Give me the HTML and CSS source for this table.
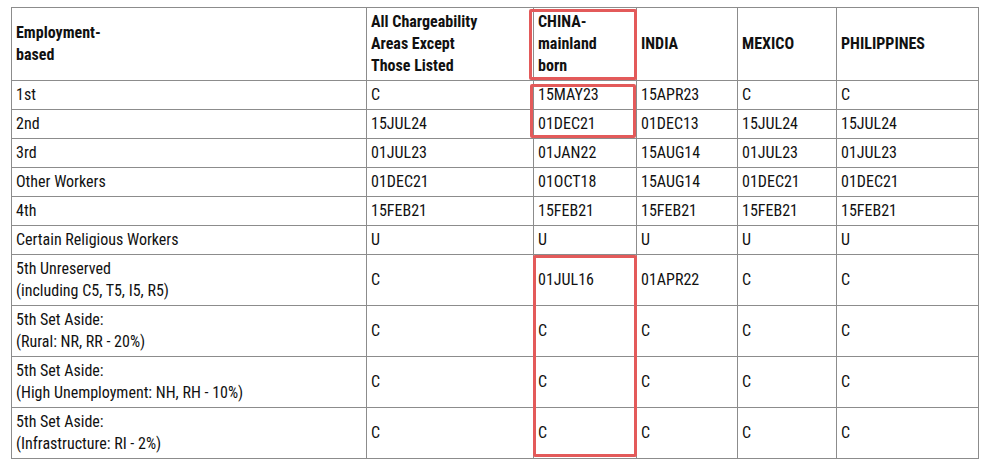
FILE: index.html
```html
<!DOCTYPE html>
<html>
<head>
<meta charset="utf-8">
<link rel="stylesheet" href="styles.css">
</head>
<body>
<div class="page">
<table class="bulletin">
  <colgroup>
    <col class="c1"><col class="c2"><col class="c3"><col class="c4"><col class="c5"><col class="c6">
  </colgroup>
  <thead>
    <tr>
      <th>Employment-<br>based</th>
      <th>All Chargeability<br>Areas Except<br>Those Listed</th>
      <th>CHINA-<br>mainland<br>born</th>
      <th>INDIA</th>
      <th>MEXICO</th>
      <th>PHILIPPINES</th>
    </tr>
  </thead>
  <tbody>
    <tr><td>1st</td><td>C</td><td>15MAY23</td><td>15APR23</td><td>C</td><td>C</td></tr>
    <tr><td>2nd</td><td>15JUL24</td><td>01DEC21</td><td>01DEC13</td><td>15JUL24</td><td>15JUL24</td></tr>
    <tr><td>3rd</td><td>01JUL23</td><td>01JAN22</td><td>15AUG14</td><td>01JUL23</td><td>01JUL23</td></tr>
    <tr><td>Other Workers</td><td>01DEC21</td><td>01OCT18</td><td>15AUG14</td><td>01DEC21</td><td>01DEC21</td></tr>
    <tr><td>4th</td><td>15FEB21</td><td>15FEB21</td><td>15FEB21</td><td>15FEB21</td><td>15FEB21</td></tr>
    <tr><td>Certain Religious Workers</td><td>U</td><td>U</td><td>U</td><td>U</td><td>U</td></tr>
    <tr><td>5th Unreserved<br>(including C5, T5, I5, R5)</td><td>C</td><td>01JUL16</td><td>01APR22</td><td>C</td><td>C</td></tr>
    <tr><td>5th Set Aside:<br>(Rural: NR, RR - 20%)</td><td>C</td><td>C</td><td>C</td><td>C</td><td>C</td></tr>
    <tr><td>5th Set Aside:<br>(High Unemployment: NH, RH - 10%)</td><td>C</td><td>C</td><td>C</td><td>C</td><td>C</td></tr>
    <tr><td>5th Set Aside:<br>(Infrastructure: RI - 2%)</td><td>C</td><td>C</td><td>C</td><td>C</td><td>C</td></tr>
  </tbody>
</table>
<div class="mark mark-head"></div>
<div class="mark mark-top"></div>
<div class="mark mark-bottom"></div>
</div>
</body>
</html>
```
FILE: styles.css
```css
html, body {
  margin: 0;
  padding: 0;
  background: #ffffff;
}
.page {
  position: relative;
  padding: 7px 0 0 11px;
  font-family: "Roboto Condensed", Roboto, "Liberation Sans", sans-serif;
  font-stretch: condensed;
  color: #111111;
}
.bulletin {
  border-collapse: collapse;
  table-layout: fixed;
  width: 967px;
  font-size: 16px;
  line-height: 22px;
}
.c1 { width: 355px; }
.c2 { width: 167px; }
.c3 { width: 103px; }
.c4 { width: 101px; }
.c5 { width: 99px; }
.c6 { width: 142px; }
.bulletin th,
.bulletin td {
  border: 1px solid #8c8c8c;
  padding: 3px 4px;
  text-align: left;
  vertical-align: middle;
}
.bulletin th {
  font-weight: 700;
}
.bulletin td {
  font-weight: 400;
}
.mark {
  position: absolute;
  border: 3px solid #e35a5a;
  border-radius: 2px;
  box-sizing: border-box;
}
.mark-head { left: 529px; top: 9px; width: 108px; height: 71px; }
.mark-top { left: 530px; top: 84px; width: 106px; height: 54px; }
.mark-bottom { left: 533px; top: 255px; width: 104px; height: 202px; }
```
